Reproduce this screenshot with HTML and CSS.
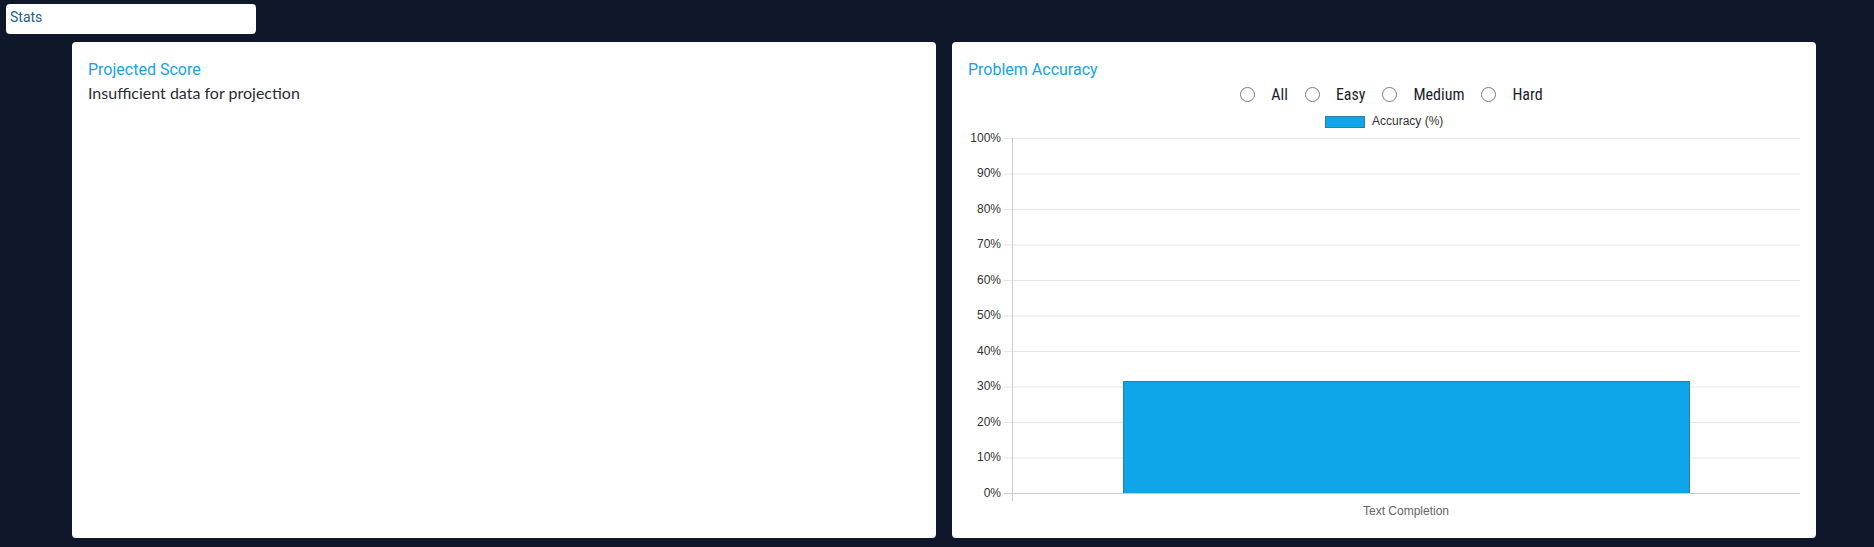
FILE: index.html
```html
<!DOCTYPE html>
<html lang="en">
<head>
<meta charset="utf-8">
<title>Stats</title>
<link rel="stylesheet" href="styles.css">
</head>
<body>
<header class="topbar">
  <div class="tab">Stats</div>
</header>
<main class="cards">
  <section class="card">
    <h2 class="card-title">Projected Score</h2>
    <p class="card-text">Insufficient data for projection</p>
  </section>
  <section class="card">
    <h2 class="card-title">Problem Accuracy</h2>
    <div class="radios">
      <label class="radio"><span class="dot"></span><span class="radio-label">All</span></label>
      <label class="radio"><span class="dot"></span><span class="radio-label">Easy</span></label>
      <label class="radio"><span class="dot"></span><span class="radio-label">Medium</span></label>
      <label class="radio"><span class="dot"></span><span class="radio-label">Hard</span></label>
    </div>
    <svg class="chart" width="832" height="416" viewBox="0 0 832 416" xmlns="http://www.w3.org/2000/svg">
      <rect x="357.5" y="10.5" width="39" height="11" fill="#0ea5e9" stroke="#2a7db3" stroke-width="1"/>
      <text x="404" y="19.2" class="legend-text">Accuracy (%)</text>
      <g stroke="#e5e5e5" stroke-width="1">
        <line x1="36" y1="32.5" x2="832" y2="32.5"/>
        <line x1="36" y1="68" x2="832" y2="68"/>
        <line x1="36" y1="103.5" x2="832" y2="103.5"/>
        <line x1="36" y1="139" x2="832" y2="139"/>
        <line x1="36" y1="174.5" x2="832" y2="174.5"/>
        <line x1="36" y1="210" x2="832" y2="210"/>
        <line x1="36" y1="245.5" x2="832" y2="245.5"/>
        <line x1="36" y1="281" x2="832" y2="281"/>
        <line x1="36" y1="316.5" x2="832" y2="316.5"/>
        <line x1="36" y1="352" x2="832" y2="352"/>
      </g>
      <rect x="155.5" y="275.5" width="566" height="112" fill="#0ea5e9" stroke="#2a7db3" stroke-width="1"/>
      <line x1="36" y1="387.5" x2="832" y2="387.5" stroke="#cccccc" stroke-width="1"/>
      <line x1="44.5" y1="32" x2="44.5" y2="395" stroke="#cccccc" stroke-width="1"/>
      <g class="tick-text" text-anchor="end">
        <text x="33" y="35.5">100%</text>
        <text x="33" y="71">90%</text>
        <text x="33" y="106.5">80%</text>
        <text x="33" y="142">70%</text>
        <text x="33" y="177.5">60%</text>
        <text x="33" y="213">50%</text>
        <text x="33" y="248.5">40%</text>
        <text x="33" y="284">30%</text>
        <text x="33" y="319.5">20%</text>
        <text x="33" y="355">10%</text>
        <text x="33" y="390.5">0%</text>
      </g>
      <text x="438" y="409" text-anchor="middle" class="x-text">Text Completion</text>
    </svg>
  </section>
</main>
</body>
</html>
```
FILE: styles.css
```css
* { box-sizing: border-box; }
html, body {
  margin: 0;
  padding: 0;
  background: #0f172a;
  height: 547px;
  overflow: hidden;
}
body {
  font-family: Roboto, "Liberation Sans", sans-serif;
}
.topbar {
  padding: 4px 6px 0;
}
.tab {
  width: 250px;
  height: 30px;
  background: #ffffff;
  border-radius: 4px;
  color: #1d5f8e;
  font-size: 14px;
  line-height: 27px;
  padding: 0 4px;
}
.cards {
  display: flex;
  gap: 16px;
  padding: 8px 0 0 72px;
}
.card {
  width: 864px;
  height: 496px;
  background: #ffffff;
  border-radius: 4px;
  padding: 16px;
  display: flex;
  flex-direction: column;
}
.card-title {
  margin: 0;
  font-family: Roboto, "Liberation Sans", sans-serif;
  font-weight: 400;
  font-size: 16px;
  line-height: 24px;
  color: #14a3e6;
}
.card-text {
  margin: 0;
  font-family: Lato, "Open Sans", sans-serif;
  font-size: 16px;
  line-height: 22px;
  color: #2a2b38;
}
.radios {
  display: flex;
  justify-content: center;
  align-items: center;
  height: 24px;
}
.radio {
  display: flex;
  align-items: center;
  margin-left: 16px;
}
.dot {
  width: 15px;
  height: 15px;
  border: 1px solid #7a7a7a;
  border-radius: 50%;
  background: #ffffff;
  margin-right: 16px;
}
.radio-label {
  font-family: "Roboto Condensed", "Liberation Sans Narrow", "DejaVu Sans Condensed", Roboto, sans-serif;
  font-size: 16px;
  color: #1a1c2c;
  margin-right: 1px;
}
.chart {
  display: block;
}
.legend-text, .tick-text text {
  font-family: "Liberation Sans", Arial, sans-serif;
  font-size: 12px;
  fill: #333333;
}
.x-text {
  font-family: "Liberation Sans", Arial, sans-serif;
  font-size: 12px;
  fill: #666666;
}
```
